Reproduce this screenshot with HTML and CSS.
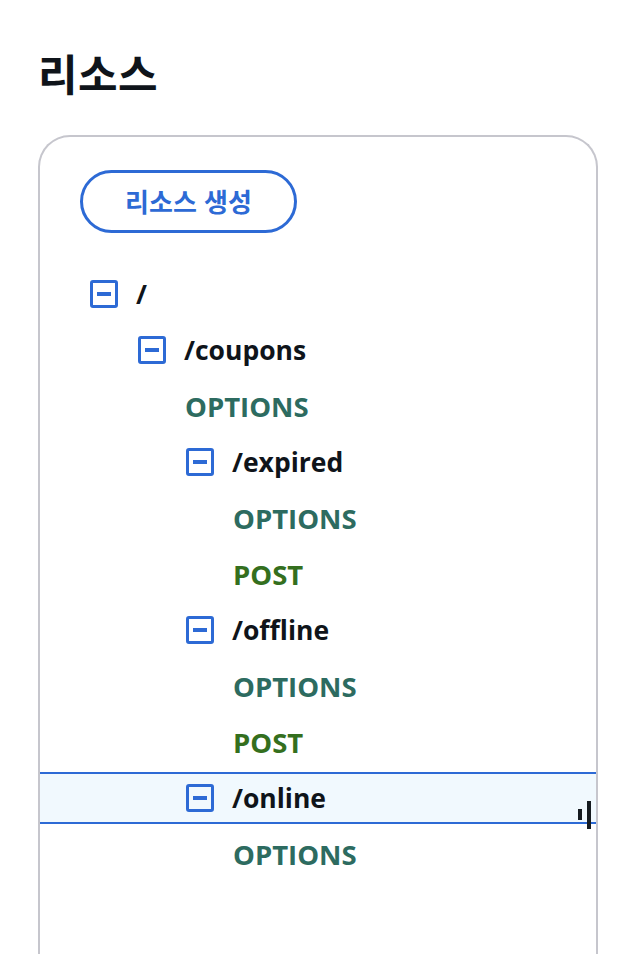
FILE: index.html
```html
<!DOCTYPE html>
<html lang="ko">
<head>
<meta charset="utf-8">
<title>리소스</title>
<link rel="stylesheet" href="styles.css">
</head>
<body>
<h1 class="title">리소스</h1>
<div class="card">
  <button class="create-btn">리소스 생성</button>
  <ul class="tree">
    <li class="row lv0"><span class="toggle"></span><span class="res">/</span></li>
    <li class="row lv1"><span class="toggle"></span><span class="res">/coupons</span></li>
    <li class="row lv1 method"><span class="options">OPTIONS</span></li>
    <li class="row lv2"><span class="toggle"></span><span class="res">/expired</span></li>
    <li class="row lv2 method"><span class="options">OPTIONS</span></li>
    <li class="row lv2 method"><span class="post">POST</span></li>
    <li class="row lv2"><span class="toggle"></span><span class="res">/offline</span></li>
    <li class="row lv2 method"><span class="options">OPTIONS</span></li>
    <li class="row lv2 method"><span class="post">POST</span></li>
    <li class="row lv2 selected"><span class="toggle"></span><span class="res">/online</span><span class="cursor"><i class="c1"></i><i class="c2"></i></span></li>
    <li class="row lv2 method"><span class="options">OPTIONS</span></li>
  </ul>
</div>
</body>
</html>
```
FILE: styles.css
```css
* { box-sizing: border-box; }
html, body { margin: 0; padding: 0; background: #ffffff; overflow: hidden; }
body {
  padding: 47px 0 0 38px;
  font-family: "Open Sans", "Noto Sans CJK KR", sans-serif;
  color: #0f141a;
  height: 954px;
}
.title {
  margin: 0;
  font-family: "Noto Sans CJK KR", sans-serif;
  font-size: 43px;
  font-weight: 700;
  line-height: 50px;
  height: 50px;
  color: #0f141a;
  letter-spacing: 0.5px;
}
.card {
  margin-top: 38px;
  width: 560px;
  height: 819px;
  border: 2px solid #c6c6cd;
  border-bottom: none;
  border-radius: 32px 32px 0 0;
  padding-top: 33px;
}
.create-btn {
  display: flex;
  align-items: center;
  justify-content: center;
  margin-left: 40px;
  width: 217px;
  height: 63px;
  border: 3px solid #2d6ad5;
  border-radius: 32px;
  background: #ffffff;
  color: #2d6ad5;
  font-family: "Noto Sans CJK KR", sans-serif;
  font-size: 26px;
  font-weight: 700;
  padding: 0 0 2px;
}
.tree {
  list-style: none;
  margin: 33px 0 0;
  padding: 0;
}
.row {
  position: relative;
  display: flex;
  align-items: center;
  height: 56px;
  font-size: 26.5px;
  font-weight: 700;
}
.lv0 { padding-left: 50px; }
.lv1 { padding-left: 98px; }
.lv2 { padding-left: 146px; }
.res { margin-left: 1px; }
.method.lv1 { padding-left: 145px; }
.method.lv2 { padding-left: 193px; }
.method { font-size: 27.5px; }
.toggle {
  position: relative;
  flex: none;
  width: 28px;
  height: 28px;
  border: 3px solid #2d6ad5;
  border-radius: 3px;
  margin-right: 17px;
}
.toggle::after {
  content: "";
  position: absolute;
  left: 4px;
  top: 9px;
  width: 14px;
  height: 4px;
  background: #2d6ad5;
}
.res { color: #0f141a; }
.options { color: #2d6b60; }
.post { color: #346f1e; }
.selected {
  height: 52px;
  margin: 2px 0 2px;
  background: #f1f9fe;
  border-top: 2px solid #2d6ad5;
  border-bottom: 2px solid #2d6ad5;
}
.cursor {
  position: absolute;
  left: 538px;
  top: 27px;
  width: 14px;
  height: 30px;
}
.cursor i {
  position: absolute;
  display: block;
  width: 4px;
  background: #161b20;
}
.cursor .c1 { left: 0; top: 8px; height: 11px; }
.cursor .c2 { left: 9px; top: 0; height: 28px; }
```
